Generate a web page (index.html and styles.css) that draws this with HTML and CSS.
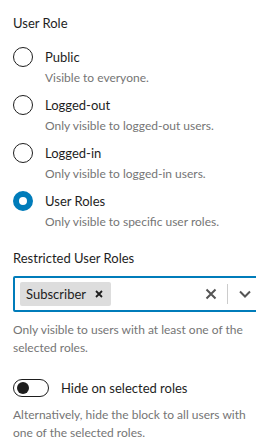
FILE: index.html
```html
<!DOCTYPE html>
<html lang="en">
<head>
    <meta charset="UTF-8">
    <meta name="viewport" content="width=device-width, initial-scale=1.0">
    <title>User Role</title>
    <link rel="stylesheet" href="styles.css">
</head>
<body>
<div class="panel">
    <div class="legend">User Role</div>
    <div class="options">
        <div class="option">
            <span class="radio"></span>
            <div class="option-text">
                <div class="option-label">Public</div>
                <div class="help">Visible to everyone.</div>
            </div>
        </div>
        <div class="option">
            <span class="radio"></span>
            <div class="option-text">
                <div class="option-label">Logged-out</div>
                <div class="help">Only visible to logged-out users.</div>
            </div>
        </div>
        <div class="option">
            <span class="radio"></span>
            <div class="option-text">
                <div class="option-label">Logged-in</div>
                <div class="help">Only visible to logged-in users.</div>
            </div>
        </div>
        <div class="option">
            <span class="radio checked"></span>
            <div class="option-text">
                <div class="option-label">User Roles</div>
                <div class="help">Only visible to specific user roles.</div>
            </div>
        </div>
    </div>

    <div class="legend roles-title">Restricted User Roles</div>
    <div class="select">
        <div class="tag">
            <span>Subscriber</span>
            <svg class="tag-x" width="8" height="8" viewBox="0 0 8 8"><path d="M1 1L7 7M7 1L1 7" stroke="#1e1e1e" stroke-width="1.8"/></svg>
        </div>
        <div class="select-tools">
            <svg width="12" height="12" viewBox="0 0 12 12"><path d="M1.5 1.5L10.5 10.5M10.5 1.5L1.5 10.5" stroke="#555" stroke-width="2"/></svg>
            <span class="sep"></span>
            <svg width="14" height="10" viewBox="0 0 14 10"><path d="M2 2.5L7 7.5L12 2.5" fill="none" stroke="#555" stroke-width="2"/></svg>
        </div>
    </div>
    <div class="help block-help">Only visible to users with at least one of the selected roles.</div>

    <div class="toggle-row">
        <span class="toggle"><span class="knob"></span></span>
        <span class="toggle-label">Hide on selected roles</span>
    </div>
    <div class="help block-help">Alternatively, hide the block to all users with one of the selected roles.</div>
</div>
</body>
</html>
```

FILE: styles.css
```css
body {
    margin: 0;
    background: #ffffff;
    font-family: Lato, "Noto Sans", sans-serif;
    color: #1e1e1e;
    overflow: hidden;
}
.panel {
    padding: 14px 9px 0 13px;
}
.legend {
    font-size: 13px;
    line-height: 18px;
    margin-bottom: 15px;
}
.options {
    display: flex;
    flex-direction: column;
    gap: 8px;
}
.option {
    display: flex;
    gap: 12px;
}
.radio {
    width: 20px;
    height: 20px;
    box-sizing: border-box;
    border: 1.5px solid #1e1e1e;
    border-radius: 50%;
    flex-shrink: 0;
}
.radio.checked {
    border: 6px solid #007cba;
}
.option-label {
    font-size: 13px;
    line-height: 20px;
}
.help {
    font-size: 12px;
    line-height: 18px;
    color: #757575;
    margin-top: 2px;
}
.roles-title {
    margin-top: 18px;
    margin-bottom: 9px;
}
.select {
    display: flex;
    align-items: center;
    justify-content: space-between;
    height: 36px;
    box-sizing: border-box;
    border: 2px solid #007cba;
    border-radius: 2px;
    padding: 0 0 0 5px;
    margin-right: -20px;
}
.tag {
    display: flex;
    align-items: center;
    gap: 9px;
    background: #dddddd;
    border-radius: 2px;
    height: 24px;
    padding: 0 8px 0 6px;
    font-size: 13px;
}
.select-tools {
    display: flex;
    align-items: center;
    gap: 10px;
    padding-right: 13px;
}
.sep {
    width: 1px;
    height: 20px;
    background: #cccccc;
}
.block-help {
    margin-top: 9px;
}
.toggle-row {
    display: flex;
    align-items: center;
    gap: 12px;
    margin-top: 22px;
}
.toggle {
    display: flex;
    align-items: center;
    width: 36px;
    height: 18px;
    box-sizing: border-box;
    border: 1px solid #1e1e1e;
    border-radius: 9px;
    padding-left: 3px;
}
.knob {
    width: 12px;
    height: 12px;
    border-radius: 50%;
    background: #1e1e1e;
}
.toggle-label {
    font-size: 13px;
}
```
